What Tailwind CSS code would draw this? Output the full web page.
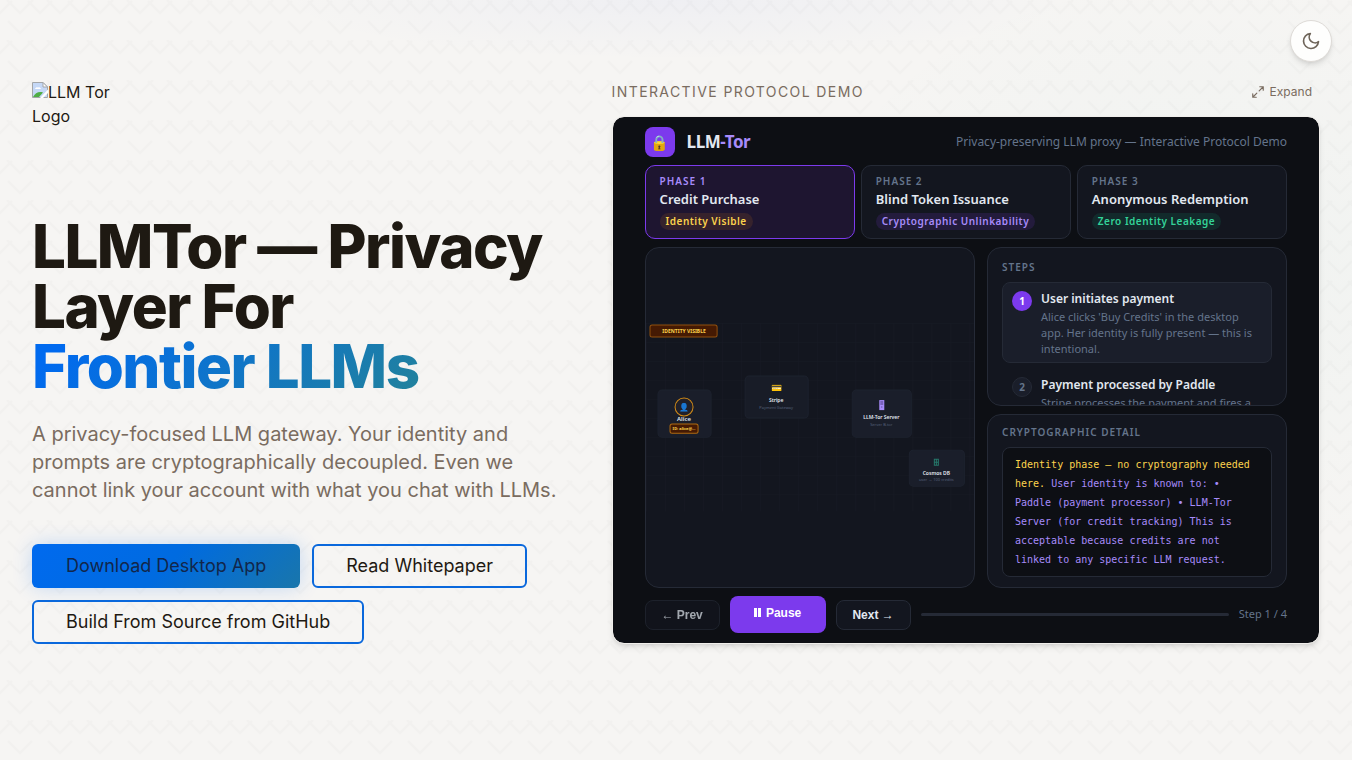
<!DOCTYPE html>
<html lang="en">
<head>
  <meta charset="UTF-8">
  <title>LLMTor — Privacy Layer For Frontier LLMs</title>
  <meta name="viewport" content="width=device-width, initial-scale=1.0">
  <script src="https://cdn.jsdelivr.net/npm/@tailwindcss/browser@4"></script>
</head>
<body class="relative min-h-screen overflow-x-hidden bg-[#f6f5f3] font-['Inter',sans-serif] text-[#1e1912]">

  <!-- Background pattern and glows -->
  <div class="absolute inset-0 -z-0 bg-[radial-gradient(ellipse_400px_60px_at_50%_0,rgba(60,90,239,0.04),transparent),radial-gradient(ellipse_400px_300px_at_88%_35%,rgba(32,160,160,0.03),transparent)]">
    <svg class="h-full w-full" aria-hidden="true">
      <defs>
        <pattern id="weave" width="40" height="40" patternUnits="userSpaceOnUse">
          <path d="M8 21 L20 33 L32 21 M-12 1 L0 13 L12 1 M28 1 L40 13 L52 1 M7 0 L20 13 L33 0" fill="none" stroke="#1e1912" stroke-opacity="0.014" stroke-width="2"/>
        </pattern>
      </defs>
      <rect width="100%" height="100%" fill="url(#weave)"/>
    </svg>
  </div>

  <!-- Theme toggle -->
  <button type="button" aria-label="Toggle theme" class="absolute top-5 right-5 z-10 flex size-[42px] items-center justify-center rounded-full border border-[#dedbd7] bg-[#fefefd] text-[#6e6459] shadow-md">
    <svg class="size-5" viewBox="0 0 24 24" fill="none" stroke="currentColor" stroke-width="2" stroke-linecap="round" stroke-linejoin="round"><path d="M21 12.79A9 9 0 1 1 11.21 3 7 7 0 0 0 21 12.79z"/></svg>
  </button>

  <main class="relative grid grid-cols-[9fr_11fr] px-8 py-20">

    <!-- Hero -->
    <section class="pr-8">
      <div class="h-24 w-20 text-base">
        <svg class="inline-block size-4 align-text-top" viewBox="0 0 16 16" aria-hidden="true">
          <path d="M.5 .5H11L15.500 5V15.500H.5z" fill="#c5d8f6" stroke="#a3a6a9"/>
          <path d="M11 .5V5h4.500z" fill="#fff" stroke="#a3a6a9"/>
          <path d="M3 7a2 2 0 0 1 3-1.500A2 2 0 0 1 9 7z" fill="#fff"/>
          <path d="M1 15C3 11 7 9 11 10.500L7 15z" fill="#4fae45"/>
          <path d="M16 7.500L8 16h3l5-5z" fill="#fff"/>
        </svg><span>LLM Tor Logo</span>
      </div>

      <h1 class="mt-10 text-[60px] leading-[60px] font-extrabold tracking-tight">
        LLMTor — Privacy Layer For<br>
        <span class="bg-[linear-gradient(135deg,#006aef,#006aef_10%,#22829a)] bg-clip-text text-transparent">Frontier LLMs</span>
      </h1>

      <p class="mt-6 text-xl leading-7 text-[#7a6c60]">A privacy-focused LLM gateway. Your identity and prompts are cryptographically decoupled. Even we cannot link your account with what you chat with LLMs.</p>

      <div class="mt-10 flex flex-wrap gap-3 text-lg leading-6">
        <a href="#download" class="rounded-md bg-[linear-gradient(135deg,#006aef,#006be0_50%,#1976ab)] px-[34px] py-[10px] text-[#12264a] shadow-[0_0_20px_rgba(0,106,239,0.2)]">Download Desktop App</a>
        <a href="#whitepaper" class="rounded-md border-2 border-[#0a68dc] px-8 py-2">Read Whitepaper</a>
        <a href="#source" class="rounded-md border-2 border-[#0a68dc] px-8 py-2">Build From Source from GitHub</a>
      </div>
    </section>

    <!-- Protocol demo -->
    <section>
      <div class="mb-3 flex h-6 items-center justify-between pr-2 text-[#7a6c60]">
        <h2 class="text-sm tracking-widest">INTERACTIVE PROTOCOL DEMO</h2>
        <button type="button" class="flex items-center gap-[5px] text-xs">
          <svg class="size-[14px]" viewBox="0 0 24 24" fill="none" stroke="currentColor" stroke-width="2" stroke-linecap="round" stroke-linejoin="round"><path d="M15 3h6v6M9 21H3v-6M21 3l-7 7M3 21l7-7"/></svg>
          Expand
        </button>
      </div>

      <div class="rounded-xl border border-[#f0eeeb] bg-[#0d0f14] bg-clip-padding px-8 py-[10px] font-['Noto_Sans',sans-serif] text-[#e2e8f0] shadow-md">
        <header class="flex h-[30px] items-center">
          <div class="flex size-[30px] items-center justify-center rounded-lg bg-[#7c3aed] text-[15px]">🔒</div>
          <h3 class="ml-3 text-[17px] font-bold tracking-tight">LLM<span class="text-[#a78bfa]">-Tor</span></h3>
          <p class="ml-auto text-xs text-[#64748b]">Privacy-preserving LLM proxy — Interactive Protocol Demo</p>
        </header>

        <div class="mt-2 grid grid-cols-3 gap-[6px]">
          <div class="rounded-[10px] border border-[#7c3aed] bg-[#1e1530] px-[14px] pt-[7px] pb-2">
            <div class="text-[10px] leading-4 font-semibold tracking-widest text-[#a78bfa]">PHASE 1</div>
            <div class="text-[13px] leading-5 font-semibold">Credit Purchase</div>
            <div class="mt-1 w-fit rounded-full bg-[#36222c] px-[6px] text-[10px] leading-[17px] font-semibold tracking-wider text-[#fcd34d]">Identity Visible</div>
          </div>
          <div class="rounded-[10px] border border-[#252a36] bg-[#13161f] px-[14px] pt-[7px] pb-2">
            <div class="text-[10px] leading-4 font-semibold tracking-widest text-[#64748b]">PHASE 2</div>
            <div class="text-[13px] leading-5 font-semibold">Blind Token Issuance</div>
            <div class="mt-1 w-fit rounded-full bg-[#231b3c] px-[6px] text-[10px] leading-[17px] font-semibold tracking-wider text-[#a78bfa]">Cryptographic Unlinkability</div>
          </div>
          <div class="rounded-[10px] border border-[#252a36] bg-[#13161f] px-[14px] pt-[7px] pb-2">
            <div class="text-[10px] leading-4 font-semibold tracking-widest text-[#64748b]">PHASE 3</div>
            <div class="text-[13px] leading-5 font-semibold">Anonymous Redemption</div>
            <div class="mt-1 w-fit rounded-full bg-[#122a2b] px-[6px] text-[10px] leading-[17px] font-semibold tracking-wider text-[#34d399]">Zero Identity Leakage</div>
          </div>
        </div>

        <div class="mt-2 grid grid-cols-[1fr_300px] gap-3">
          <!-- Diagram -->
          <div class="flex items-center rounded-[14px] border border-[#252a36] bg-[#13161f]">
            <svg class="w-full font-['Noto_Sans',sans-serif]" viewBox="0 0 328 188" text-anchor="middle">
              <defs>
                <pattern id="grid" width="19" height="19" patternUnits="userSpaceOnUse">
                  <path d="M19 0H0V19" fill="none" stroke="#252a36" stroke-opacity="0.22"/>
                </pattern>
              </defs>
              <rect width="328" height="188" fill="url(#grid)"/>

              <rect x="4" y="2" width="67" height="12" rx="2" fill="#451a03" stroke="#92500e"/>
              <text x="38" y="10" font-size="5" font-weight="700" fill="#fcd34d">IDENTITY VISIBLE</text>

              <rect x="12" y="67" width="53" height="47" rx="4" fill="#1a1e2a" stroke="#1d222e"/>
              <circle cx="38" cy="84" r="9" fill="#20202a" stroke="#d08a17"/>
              <text x="38" y="87" font-size="8">👤</text>
              <text x="38" y="98" font-size="6" font-weight="600" fill="#e2e8f0">Alice</text>
              <rect x="24" y="101" width="28" height="9" rx="2" fill="#451a03" stroke="#b06a10"/>
              <text x="38" y="107" font-size="4" font-weight="700" fill="#fcd34d">ID: alice@…</text>

              <rect x="99" y="53" width="63" height="42" rx="4" fill="#181c27" stroke="#1d222e"/>
              <text x="130" y="68" font-size="9">💳</text>
              <text x="130" y="79" font-size="5" font-weight="600" fill="#e2e8f0">Stripe</text>
              <text x="130" y="86" font-size="4" fill="#56617a">Payment Gateway</text>

              <rect x="206" y="67" width="59" height="47" rx="4" fill="#1a1e2a" stroke="#1d222e"/>
              <g fill="#a78bfa">
                <rect x="233" y="77" width="5" height="10"/>
                <path d="M234 79h3M234 81h3M235 84h1" stroke="#4c3a80"/>
              </g>
              <text x="235" y="96" font-size="5" font-weight="600" fill="#e2e8f0">LLM-Tor Server</text>
              <text x="235" y="103" font-size="4" fill="#56617a">Server B.tor</text>

              <rect x="263" y="127" width="55" height="36" rx="4" fill="#1a1e2a" stroke="#1d222e"/>
              <path d="M288 136h4v6h-4zM288 139h4M290 136v6" fill="none" stroke="#26776a"/>
              <text x="290" y="152" font-size="5" font-weight="600" fill="#e2e8f0">Cosmos DB</text>
              <text x="290" y="158" font-size="4" fill="#56617a">user → 100 credits</text>
            </svg>
          </div>

          <div class="flex flex-col gap-2">
            <!-- Steps -->
            <div class="h-[159px] overflow-hidden rounded-[14px] border border-[#252a36] bg-[#13161f] px-[14px] pt-[11px]">
              <h4 class="text-[10px] leading-4 font-semibold tracking-widest text-[#64748b]">STEPS</h4>
              <ol class="mt-[7px] flex flex-col gap-[5px]">
                <li class="flex gap-[9px] rounded-lg border border-[#252a36] bg-[#1a1e2a] px-[9px] pt-2 pb-[5px]">
                  <span class="flex size-5 shrink-0 items-center justify-center rounded-full bg-[#7c3aed] text-[10px] font-bold text-white">1</span>
                  <div>
                    <div class="text-xs leading-4 font-semibold">User initiates payment</div>
                    <p class="mt-[2px] text-[11px] leading-4 text-[#64748b]">Alice clicks 'Buy Credits' in the desktop app. Her identity is fully present — this is intentional.</p>
                  </div>
                </li>
                <li class="flex gap-[9px] rounded-lg border border-transparent px-[9px] pt-2 pb-[5px]">
                  <span class="flex size-5 shrink-0 items-center justify-center rounded-full border border-[#252a36] bg-[#1a1e2a] text-[10px] font-bold text-[#64748b]">2</span>
                  <div>
                    <div class="text-xs leading-4 font-semibold">Payment processed by Paddle</div>
                    <p class="mt-[2px] text-[11px] leading-4 text-[#64748b]">Stripe processes the payment and fires a webhook.</p>
                  </div>
                </li>
              </ol>
            </div>

            <!-- Crypto detail -->
            <div class="rounded-[14px] border border-[#252a36] bg-[#13161f] px-[14px] pt-[9px] pb-[10px]">
              <h4 class="text-[10px] leading-4 font-semibold tracking-widest text-[#64748b]">CRYPTOGRAPHIC DETAIL</h4>
              <p class="mt-[7px] rounded-lg border border-[#252a36] bg-[#0d0f14] px-3 py-[7px] font-['DejaVu_Sans_Mono',monospace] text-[10px] leading-[19px] text-[#a78bfa]"><span class="text-[#fcd34d]">Identity phase — no cryptography needed here.</span> User identity is known to: • Paddle (payment processor) • LLM-Tor Server (for credit tracking) This is acceptable because credits are not linked to any specific LLM request.</p>
            </div>
          </div>
        </div>

        <!-- Controls -->
        <div class="mt-2 flex items-center gap-[10px] font-['Liberation_Sans',sans-serif] text-xs font-bold">
          <button type="button" class="h-[30px] w-[75px] rounded-lg border border-[#252a36] bg-[#13161f] text-[#e2e8f0] opacity-70">← Prev</button>
          <button type="button" class="flex h-[37px] w-24 items-center justify-center gap-[5px] rounded-lg bg-[#7c3aed] pb-1 text-white">
            <svg class="h-[9px] w-[7px]" viewBox="0 0 7 9" fill="currentColor" aria-hidden="true"><path d="M0 0h3v9H0zM4 0h3v9H4z"/></svg>
            Pause
          </button>
          <button type="button" class="h-[30px] w-[75px] rounded-lg border border-[#252a36] bg-[#13161f]">Next →</button>
          <div class="h-[3px] flex-1 rounded-full bg-[#252a36]"></div>
          <span class="font-['Noto_Sans',sans-serif] text-[11px] font-normal text-[#64748b]">Step 1 / 4</span>
        </div>
      </div>
    </section>
  </main>
</body>
</html>
